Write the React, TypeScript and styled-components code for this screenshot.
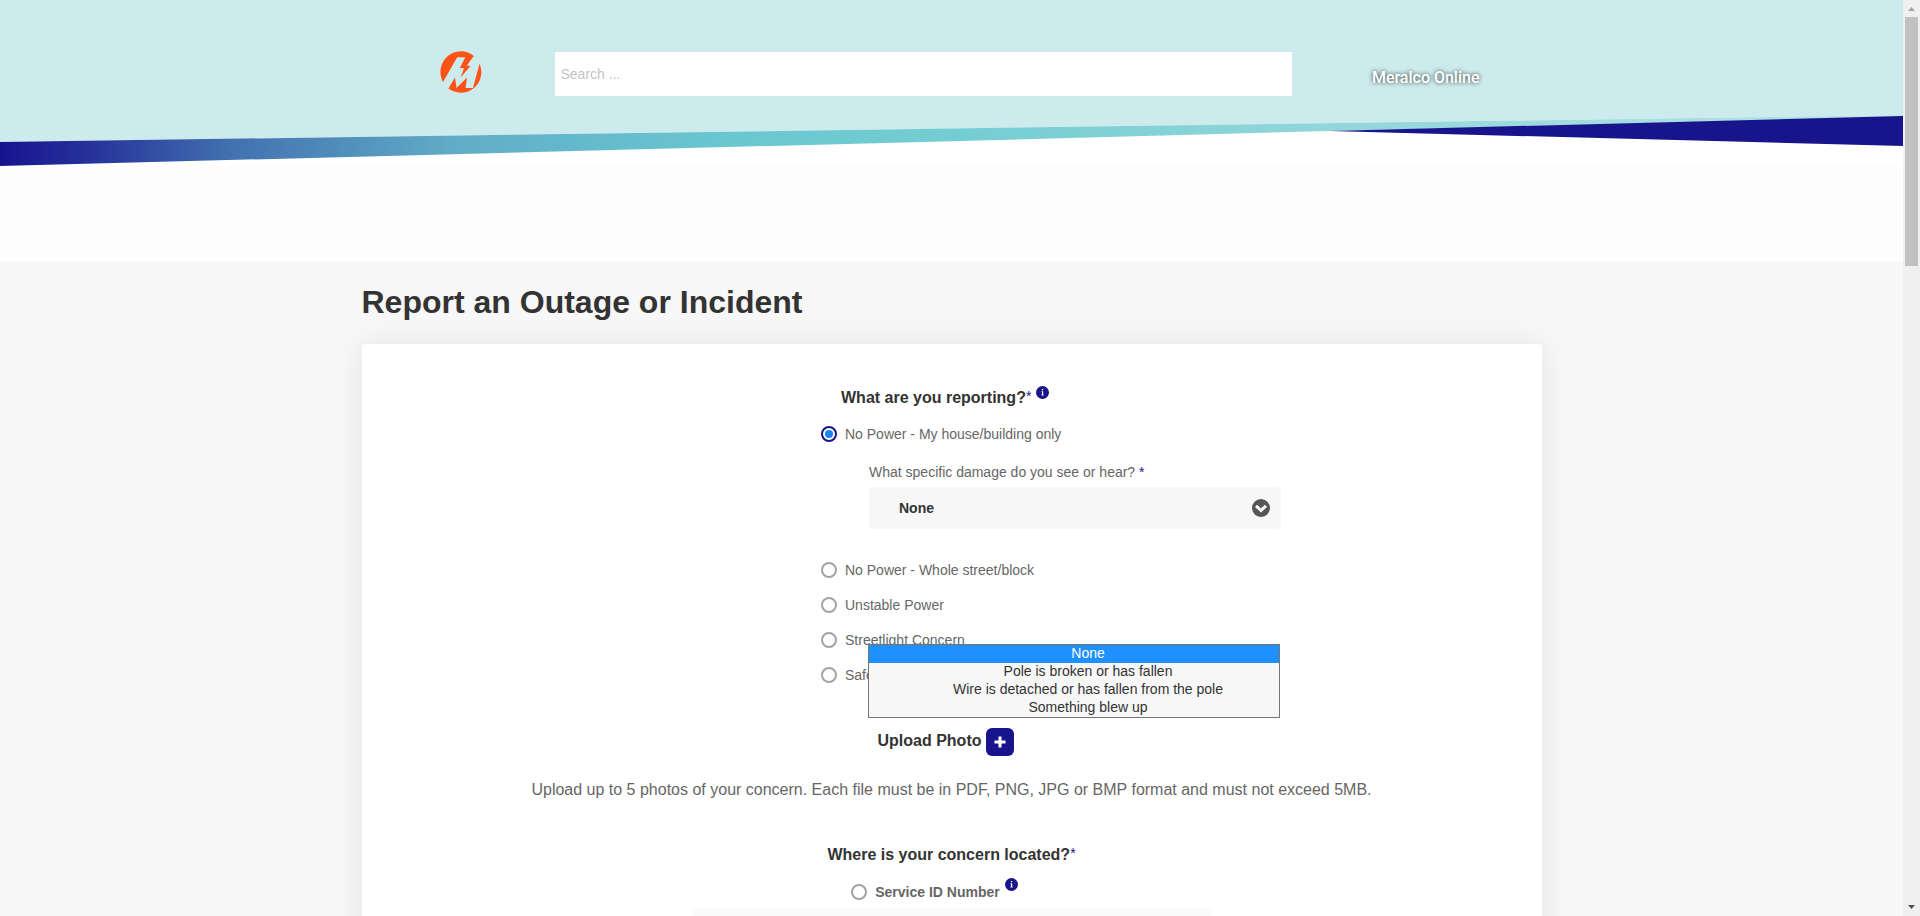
import React, { useState } from "react";
import styled, { createGlobalStyle } from "styled-components";

const navy = "#18148c";

const GlobalStyle = createGlobalStyle`
  *, *::before, *::after { box-sizing: border-box; }
  body {
    margin: 0;
    background: #f7f7f7;
    color: #333;
    font-family: "Liberation Sans", Arial, Helvetica, sans-serif;
    font-size: 14px;
  }
  h1, h2, p, ul, fieldset { margin: 0; padding: 0; border: 0; }
`;

const Shell = styled.div`
  display: flex;
  height: 100vh;
`;

const Page = styled.div`
  flex: 1;
  min-width: 0;
  overflow-y: auto;
  scrollbar-width: none;
`;

const ScrollTrack = styled.div`
  display: flex;
  flex-direction: column;
  align-items: center;
  width: 17px;
  background: #f0f0f0;
`;

const ScrollThumb = styled.div`
  width: 13px;
  flex: 0 0 27.2%;
  background: #c1c1c1;
`;

const ScrollArrow = styled.svg`
  display: block;
  width: 17px;
  height: 17px;
  flex: none;
`;

const ScrollSpace = styled.div`
  flex: 1;
`;

const Banner = styled.header`
  position: relative;
  height: 166px;
  background: #fff;
`;

const Waves = styled.svg`
  position: absolute;
  inset: 0;
  width: 100%;
  height: 100%;
`;

const BannerRow = styled.div`
  position: relative;
  display: flex;
  align-items: flex-start;
  max-width: 1180px;
  margin: 0 auto;
  padding: 51px 62px 0 78px;
`;

const HomeLink = styled.a`
  display: flex;
  margin-right: 73px;
`;

const SearchForm = styled.form`
  display: flex;
  flex: 1;
  margin-top: 1px;
`;

const SearchInput = styled.input`
  width: 100%;
  height: 44px;
  padding: 0 6px;
  border: 0;
  background: #fff;
  color: #333;
  font: 14px "Liberation Sans", Arial, sans-serif;
  &::placeholder { color: #c4c4c4; opacity: 1; }
`;

const OnlineLink = styled.a`
  margin: 17px 0 0 80px;
  color: #fff;
  font: 500 16px/20px Roboto, sans-serif;
  text-decoration: none;
  text-shadow: 0 0 4px rgba(0, 0, 0, 0.8);
`;

const SubBanner = styled.div`
  height: 95px;
  background: #fdfdfd;
`;

const Content = styled.main`
  max-width: 1180px;
  margin: 0 auto;
`;

const Title = styled.h1`
  padding: 22px 0;
  font-size: 32px;
  line-height: 39px;
`;

const Card = styled.form`
  display: flex;
  flex-direction: column;
  align-items: center;
  padding: 44px 0 60px;
  border-radius: 4px;
  background: #fff;
  box-shadow: 0 0 30px rgba(0, 0, 0, 0.08);
`;

const Question = styled.h2`
  display: flex;
  align-items: flex-start;
  font-size: 16px;
  line-height: 20px;
`;

const Required = styled.span`
  color: ${navy};
  font-weight: 400;
  font-size: 14px;
  line-height: 16px;
`;

const ReportGroup = styled.fieldset`
  display: flex;
  flex-direction: column;
  width: 460px;
  min-width: 0;
  margin-left: 199px;
`;

const ReportQuestion = styled(Question)`
  padding-left: 20px;
  margin-bottom: 16px;
`;

const InfoButton = styled.button`
  display: flex;
  height: 16px;
  margin: -2px 0 0 5px;
  padding: 0;
  border: 0;
  background: none;
`;

const Choice = styled.label<{ $bold?: boolean }>`
  display: flex;
  align-items: center;
  gap: 8px;
  height: 20px;
  color: #666;
  font-size: 14px;
  font-weight: ${(p) => (p.$bold ? 700 : 400)};
  line-height: 20px;
`;

const Radio = styled.input`
  appearance: none;
  display: grid;
  place-items: center;
  flex: none;
  width: 16px;
  height: 16px;
  margin: 0;
  border: 2px solid #a3a3a3;
  border-radius: 50%;
  background: #fff;
  &:checked { border-color: ${navy}; }
  &:checked::before {
    content: "";
    width: 8px;
    height: 8px;
    border-radius: 50%;
    background: #1788f0;
  }
`;

const ChoiceList = styled.div`
  display: flex;
  flex-direction: column;
  gap: 15px;
`;

const Damage = styled.div`
  position: relative;
  display: flex;
  flex-direction: column;
  gap: 5px;
  margin: 18px 0 31px 48px;
`;

const DamageLabel = styled.label`
  color: #666;
  line-height: 20px;
`;

const SelectBox = styled.div`
  position: relative;
  display: flex;
`;

const Select = styled.select`
  appearance: none;
  width: 100%;
  height: 42px;
  padding: 0 60px 0 30px;
  border: 0;
  border-radius: 4px;
  background: #f7f7f7;
  color: #333;
  font: 700 14px "Liberation Sans", Arial, sans-serif;
`;

const SelectIcon = styled.svg`
  position: absolute;
  right: 11px;
  top: 12px;
  pointer-events: none;
`;

const Menu = styled.ul`
  position: absolute;
  z-index: 2;
  top: 182px;
  left: -1px;
  width: 412px;
  border: 1px solid #767676;
  background: #f7f7f7;
  list-style: none;
`;

const MenuItem = styled.li<{ $active: boolean }>`
  height: 18px;
  padding-left: 28px;
  background: ${(p) => (p.$active ? "#1e90ff" : "transparent")};
  color: ${(p) => (p.$active ? "#fff" : "#333")};
  line-height: 16px;
  text-align: center;
`;

const UploadRow = styled.div`
  display: flex;
  gap: 5px;
  margin: 43px 11px 0 0;
  font-size: 16px;
  font-weight: 700;
  line-height: 26px;
`;

const AddButton = styled.button`
  display: grid;
  place-items: center;
  width: 28px;
  height: 28px;
  padding: 0;
  border: 0;
  border-radius: 6px;
  background: ${navy};
`;

const UploadNote = styled.p`
  margin: 23px 0 44px;
  color: #666;
  font-size: 16px;
  line-height: 22px;
`;

const ServiceRow = styled.div`
  display: flex;
  align-items: flex-start;
  margin: 15px 34px 6px 0;
`;

const ServiceChoice = styled(Choice)`
  margin-top: 2px;
`;

const ServiceInput = styled.input`
  width: 520px;
  max-width: 100%;
  height: 42px;
  padding: 0 12px;
  border: 0;
  border-radius: 4px;
  background: #fafafa;
`;

const damages = [
  "None",
  "Pole is broken or has fallen",
  "Wire is detached or has fallen from the pole",
  "Something blew up",
];

const otherReports = [
  "No Power - Whole street/block",
  "Unstable Power",
  "Streetlight Concern",
  "Safety Concern",
];

const Logo = () => (
  <svg width="42" height="42" viewBox="0 0 42 42" aria-hidden="true">
    <path
      fill="#ff5216"
      d="M21 0.3A20.7 20.7 0 0 1 33.8 5L26.8 14.6L30.4 15L20.7 26.4L24 17.3L19.8 17L25.3 6.2L17.2 6.2L3 31A20.7 20.7 0 0 1 21 0.3Z"
    />
    <path
      fill="#ff5216"
      d="M39.5 12.8A20.7 20.7 0 0 1 33 37.8A20.7 20.7 0 0 1 8.4 37.6L15 26.5L16.5 37L27 26.4L25.6 37L33 37Z"
    />
  </svg>
);

const Info = ({ label }: { label: string }) => (
  <InfoButton type="button" aria-label={label}>
    <svg width="13" height="13" viewBox="0 0 13 13" aria-hidden="true">
      <circle cx="6.5" cy="6.5" r="6.5" fill={navy} />
      <path fill="#fff" d="M5.9 3h1.3v1.3H5.9zM5.5 5.3h1.7v3.5h.5v.8H5.4v-.8h.5V6.1h-.4z" />
    </svg>
  </InfoButton>
);

export default function App() {
  const [report, setReport] = useState("house");
  const [damage, setDamage] = useState(damages[0]);

  return (
    <Shell>
      <GlobalStyle />
      <Page>
        <Banner>
          <Waves viewBox="0 0 1903 166" preserveAspectRatio="none" aria-hidden="true">
            <defs>
              <linearGradient id="ribbon" gradientUnits="userSpaceOnUse" x1="0" x2="1903" y1="0" y2="0">
                <stop offset="0" stopColor="#171390" />
                <stop offset="0.05" stopColor="#27349a" />
                <stop offset="0.12" stopColor="#4170b0" />
                <stop offset="0.24" stopColor="#61adc7" />
                <stop offset="0.38" stopColor="#69c7d0" />
                <stop offset="0.5" stopColor="#74cdd2" />
                <stop offset="0.7" stopColor="#91d6da" />
                <stop offset="1" stopColor="#b8e4e6" />
              </linearGradient>
            </defs>
            <polygon points="0,0 1903,0 1903,115 0,142" fill="#cdebec" />
            <polygon points="0,142 1903,115 1903,117 1330,131 960,141 0,166" fill="url(#ribbon)" />
            <polygon points="1330,131 1903,116 1903,146" fill={navy} />
          </Waves>
          <BannerRow>
            <HomeLink href="#" aria-label="Meralco">
              <Logo />
            </HomeLink>
            <SearchForm role="search">
              <SearchInput type="search" placeholder="Search ..." aria-label="Search" />
            </SearchForm>
            <OnlineLink href="#">Meralco Online</OnlineLink>
          </BannerRow>
        </Banner>
        <SubBanner />
        <Content>
          <Title>Report an Outage or Incident</Title>
          <Card>
            <ReportGroup aria-labelledby="report-question">
              <ReportQuestion id="report-question">
                What are you reporting?<Required>*</Required>
                <Info label="About report types" />
              </ReportQuestion>
              <Choice>
                <Radio type="radio" name="report" checked={report === "house"} onChange={() => setReport("house")} />
                No Power - My house/building only
              </Choice>
              <Damage>
                <DamageLabel htmlFor="damage">
                  What specific damage do you see or hear? <Required>*</Required>
                </DamageLabel>
                <SelectBox>
                  <Select id="damage" value={damage} onChange={(e) => setDamage(e.target.value)}>
                    {damages.map((d) => (
                      <option key={d}>{d}</option>
                    ))}
                  </Select>
                  <SelectIcon width="18" height="18" viewBox="0 0 18 18" aria-hidden="true">
                    <circle cx="9" cy="9" r="9" fill="#555" />
                    <path d="M4 6.8L9 11.4L14 6.8" fill="none" stroke="#f7f7f7" strokeWidth="3" />
                  </SelectIcon>
                </SelectBox>
                <Menu role="listbox" aria-label="Damage">
                  {damages.map((d) => (
                    <MenuItem
                      key={d}
                      role="option"
                      aria-selected={d === damage}
                      $active={d === damage}
                      onClick={() => setDamage(d)}
                    >
                      {d}
                    </MenuItem>
                  ))}
                </Menu>
              </Damage>
              <ChoiceList>
                {otherReports.map((r) => (
                  <Choice key={r}>
                    <Radio type="radio" name="report" checked={report === r} onChange={() => setReport(r)} />
                    {r}
                  </Choice>
                ))}
              </ChoiceList>
            </ReportGroup>
            <UploadRow>
              <span id="upload-label">Upload Photo</span>
              <AddButton type="button" aria-labelledby="upload-label">
                <svg width="12" height="12" viewBox="0 0 12 12" aria-hidden="true">
                  <path d="M6 0.5V11.5M0.5 6H11.5" stroke="#fff" strokeWidth="3" />
                </svg>
              </AddButton>
            </UploadRow>
            <UploadNote>
              Upload up to 5 photos of your concern. Each file must be in PDF, PNG, JPG or BMP format and must not
              exceed 5MB.
            </UploadNote>
            <Question>
              Where is your concern located?<Required>*</Required>
            </Question>
            <ServiceRow>
              <ServiceChoice $bold>
                <Radio type="radio" name="location" />
                Service ID Number
              </ServiceChoice>
              <Info label="About the Service ID Number" />
            </ServiceRow>
            <ServiceInput type="text" aria-label="Service ID Number" disabled />
          </Card>
        </Content>
      </Page>
      <ScrollTrack aria-hidden="true">
        <ScrollArrow viewBox="0 0 17 17">
          <path d="M5 11L8.5 7L12 11Z" fill="#a3a3a3" />
        </ScrollArrow>
        <ScrollThumb />
        <ScrollSpace />
        <ScrollArrow viewBox="0 0 17 17">
          <path d="M5 6L8.5 10L12 6Z" fill="#505050" />
        </ScrollArrow>
      </ScrollTrack>
    </Shell>
  );
}
